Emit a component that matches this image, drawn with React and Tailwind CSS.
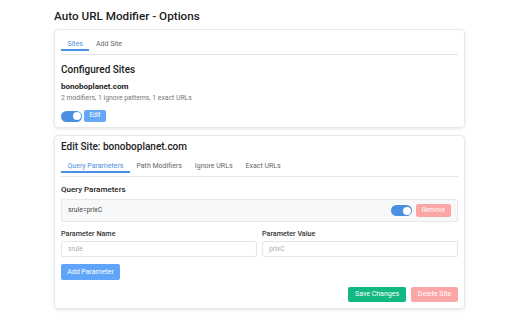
import React from "react";

function Toggle() {
  return (
    <div className="w-[21px] h-[11px] rounded-full bg-[#4a90e2] flex items-center justify-end pr-[1.5px]">
      <div className="w-[8px] h-[8px] rounded-full bg-white" />
    </div>
  );
}

function Tab({ label, active }) {
  return (
    <div
      className={
        "px-[6.5px] leading-[10px] -mb-px border-b-2 " +
        (active ? "border-[#4a90e2] text-[#4a90e2]" : "border-transparent text-[#666]")
      }
    >
      {label}
    </div>
  );
}

export default function App() {
  return (
    <div
      className="w-[512px] h-[320px] bg-white pl-[54px] pr-[47px] pt-[7px] text-[#333]"
      style={{ fontFamily: "Roboto, 'Liberation Sans', sans-serif" }}
    >
      <h1 className="text-[11.7px] font-medium leading-[19px] mb-[3px] text-[#222]">
        Auto URL Modifier - Options
      </h1>

      <div className="border border-[#e8e8e8] rounded-[4px] shadow-[0_1px_3px_rgba(0,0,0,0.1)] px-[6px] pb-[7px] h-[99px]">
        <div className="flex border-b border-[#e5e5e5] pt-[9px] pb-[4px] text-[7px]">
          <div className="flex items-end">
            <Tab label="Sites" active />
            <Tab label="Add Site" />
          </div>
        </div>
        <div className="text-[10px] font-medium leading-[14px] mt-[8px] text-[#222]">Configured Sites</div>
        <div className="text-[8px] font-bold leading-[12px] mt-[4px] text-[#222]">bonoboplanet.com</div>
        <div className="text-[6.8px] leading-[10px] text-[#777]">2 modifiers, 1 ignore patterns, 1 exact URLs</div>
        <div className="flex items-center gap-[2px] mt-[7px]">
          <Toggle />
          <div className="h-[12px] w-[22px] rounded-[2px] bg-[#64a8f5] text-white text-[6.5px] flex items-center justify-center">
            Edit
          </div>
        </div>
      </div>

      <div className="mt-[7px] border border-[#e8e8e8] rounded-[4px] shadow-[0_1px_3px_rgba(0,0,0,0.1)] px-[6px] pt-[4px] h-[174px]">
        <div className="text-[10px] font-medium leading-[14px] text-[#222]">Edit Site: bonoboplanet.com</div>
        <div className="flex border-b border-[#e5e5e5] pt-[7px] pb-[4px] text-[7px]">
          <div className="flex items-end">
            <Tab label="Query Parameters" active />
            <Tab label="Path Modifiers" />
            <Tab label="Ignore URLs" />
            <Tab label="Exact URLs" />
          </div>
        </div>
        <div className="text-[8px] font-medium leading-[12px] mt-[7px] text-[#222]">Query Parameters</div>
        <div className="mt-[3px] h-[23px] bg-[#f7f8fa] border border-[#e8e8e8] rounded-[2px] flex items-center pl-[6px] pr-[6px]">
          <div className="text-[6.8px] text-[#444] flex-1">srule=prixC</div>
          <Toggle />
          <div className="ml-[4px] h-[13px] w-[35px] rounded-[2px] bg-[#fca5a5] text-white text-[6.5px] flex items-center justify-center">
            Remove
          </div>
        </div>
        <div className="grid grid-cols-2 gap-[5px] mt-[6px]">
          <div>
            <div className="text-[7.2px] font-medium leading-[11px] text-[#333]">Parameter Name</div>
            <div className="mt-[2px] h-[16px] border border-[#e5e5e5] rounded-[2px] flex items-center pl-[6px] text-[6.8px] text-[#aaa]">
              srule
            </div>
          </div>
          <div>
            <div className="text-[7.2px] font-medium leading-[11px] text-[#333]">Parameter Value</div>
            <div className="mt-[2px] h-[16px] border border-[#e5e5e5] rounded-[2px] flex items-center pl-[6px] text-[6.8px] text-[#aaa]">
              prixC
            </div>
          </div>
        </div>
        <div className="mt-[7px] h-[16px] w-[59px] rounded-[2px] bg-[#60a5fa] text-white text-[7px] flex items-center justify-center">
          Add Parameter
        </div>
        <div className="flex justify-end gap-[5px] mt-[7px]">
          <div className="h-[15px] w-[58px] rounded-[2px] bg-[#10b981] text-white text-[7px] flex items-center justify-center">
            Save Changes
          </div>
          <div className="h-[15px] w-[47px] rounded-[2px] bg-[#fca5a5] text-white text-[7px] flex items-center justify-center">
            Delete Site
          </div>
        </div>
      </div>
    </div>
  );
}
